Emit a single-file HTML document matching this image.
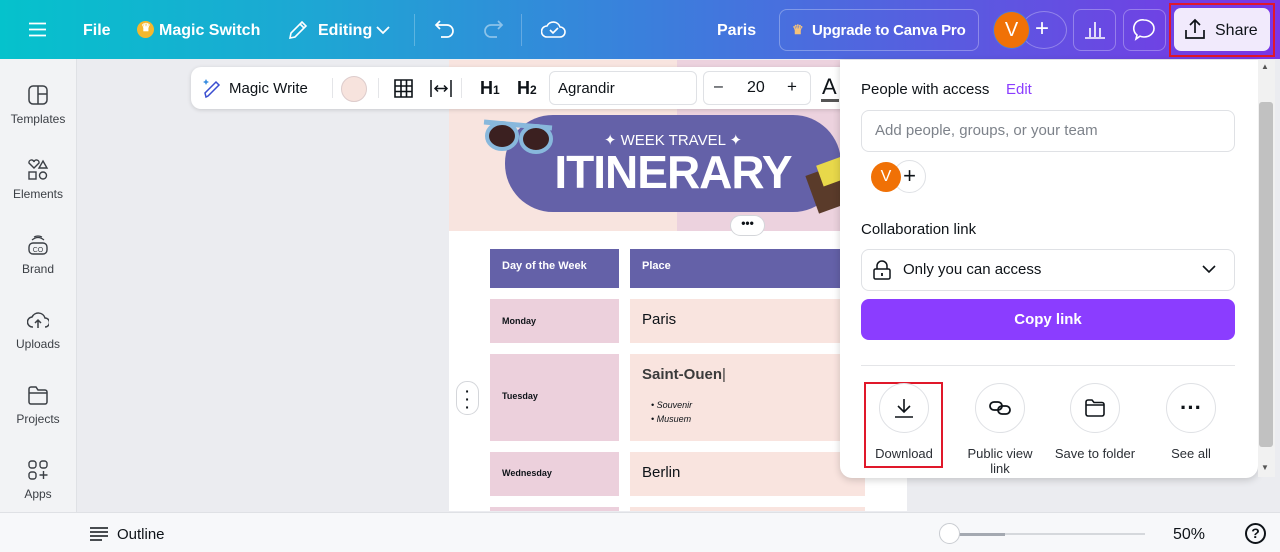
<!DOCTYPE html>
<html><head><meta charset="utf-8"><style>
*{box-sizing:border-box;margin:0;padding:0}
body{width:1280px;height:552px;overflow:hidden;font-family:"Liberation Sans",sans-serif;background:#ebecf0;position:relative;color:#0e1318}
.abs{position:absolute}
.top{left:0;top:0;width:1280px;height:59px;background:linear-gradient(90deg,#05c2cc 0%,#1ea6d4 25%,#3a80dc 50%,#5a5ae0 75%,#7a35e6 100%);color:#fff;font-weight:bold;font-size:16px}
.top .t{position:absolute;top:22px}
.sep{position:absolute;top:14px;width:1px;height:32px;background:rgba(255,255,255,.25)}
.side{left:0;top:59px;width:76px;height:453px;background:#f2f3f5}
.side .it{position:absolute;left:0;width:76px;text-align:center;font-size:12px;color:#3b3f45}
.side .it svg{display:block;margin:0 auto 6px}
.bottom{left:0;top:512px;width:1280px;height:40px;background:#f7f8fa;border-top:1px solid #dfe1e5}
.page{left:449px;top:60px;width:458px;height:451px;background:#fff;overflow:hidden}
.cell{position:absolute}
.tb{left:191px;top:67px;width:670px;height:42px;background:#fff;border-radius:10px;box-shadow:0 1px 4px rgba(0,0,0,.15);font-size:15px}
.panel{left:840px;top:60px;width:418px;height:418px;background:#fff;border-radius:0 0 12px 12px;box-shadow:0 2px 8px rgba(0,0,0,.18)}
.circ{position:absolute;width:50px;height:50px;border:1px solid #dfe1e5;border-radius:50%;display:flex;align-items:center;justify-content:center}
.lbl{position:absolute;font-size:13px;color:#2b2f35;text-align:center;width:90px;line-height:15px}
</style></head><body>
<div class="abs top">
  <svg class="abs" style="left:29px;top:22px" width="17" height="15"><path d="M0 1.5h17M0 7.5h17M0 13.5h17" stroke="#fff" stroke-width="1.8"/></svg>
  <span class="t" style="left:83px">File</span>
  <div class="abs" style="left:137px;top:21px;width:17px;height:17px;border-radius:50%;background:#f5b82e"></div>
  <span class="abs" style="left:141px;top:21px;color:#fff;font-size:11px">♛</span>
  <span class="t" style="left:159px">Magic Switch</span>
  <svg class="abs" style="left:287px;top:19px" width="22" height="22"><path d="M3 19l1-5L15 3l4 4L8 18z M13 5l4 4" fill="none" stroke="#fff" stroke-width="1.6"/></svg>
  <span class="t" style="left:318px">Editing</span>
  <svg class="abs" style="left:376px;top:26px" width="14" height="9"><path d="M1 1l6 6 6-6" fill="none" stroke="#fff" stroke-width="1.8"/></svg>
  <div class="sep" style="left:414px"></div>
  <svg class="abs" style="left:434px;top:19px" width="22" height="20"><path d="M6 2L2 6l4 4M2 6h11a6 6 0 010 12H7" fill="none" stroke="#fff" stroke-width="1.7"/></svg>
  <svg class="abs" style="left:482px;top:19px" width="22" height="20"><path d="M16 2l4 4-4 4M20 6H9a6 6 0 000 12h6" fill="none" stroke="rgba(255,255,255,.45)" stroke-width="1.7"/></svg>
  <div class="sep" style="left:521px"></div>
  <svg class="abs" style="left:541px;top:19px" width="25" height="20"><path d="M6 18h13a5 5 0 000-10 7 7 0 00-13-1 5 5 0 000 11z M9 11l3 3 5-5" fill="none" stroke="#fff" stroke-width="1.6"/></svg>
  <span class="t" style="left:717px">Paris</span>
  <div class="abs" style="left:779px;top:9px;width:200px;height:42px;border:1px solid rgba(255,255,255,.3);border-radius:8px"></div>
  <span class="abs" style="left:792px;top:22px;color:#f5c27a;font-size:13px">♛</span>
  <span class="t" style="left:812px;font-size:15px;letter-spacing:-0.2px">Upgrade to Canva Pro</span>
  <div class="abs" style="left:1021px;top:11px;width:46px;height:38px;border:1px solid rgba(255,255,255,.3);border-radius:50%"></div>
  <span class="abs" style="left:1035px;top:15px;font-size:24px;font-weight:normal">+</span>
  <div class="abs" style="left:993px;top:11px;width:37px;height:38px;border-radius:50%;background:#f07106;border:1px solid #4a77e0;text-align:center;line-height:36px;font-size:20px;font-weight:normal">V</div>
  <div class="abs" style="left:1073px;top:9px;width:43px;height:42px;border:1px solid rgba(255,255,255,.3);border-radius:8px"></div>
  <svg class="abs" style="left:1084px;top:19px" width="22" height="20"><path d="M1 19h20M6 18V9M11 18V3M16 18V9" stroke="#fff" stroke-width="1.6"/></svg>
  <div class="abs" style="left:1123px;top:9px;width:43px;height:42px;border:1px solid rgba(255,255,255,.3);border-radius:8px"></div>
  <svg class="abs" style="left:1132px;top:18px" width="24" height="24"><path d="M12 2a10 8.5 0 110 17c-1.5 0-3-.3-4-.8L4 21l1-4A8.5 8.5 0 0112 2z" fill="none" stroke="#fff" stroke-width="1.6"/></svg>
  <div class="abs" style="left:1169px;top:3px;width:106px;height:54px;border:2px solid #e0182a"></div>
  <div class="abs" style="left:1174px;top:8px;width:96px;height:43px;background:#f1eafc;border-radius:7px"></div>
  <svg class="abs" style="left:1184px;top:18px" width="22" height="22"><path d="M2 12v8h18v-8M11 15V2M6 7l5-5 5 5" fill="none" stroke="#0e1318" stroke-width="1.7"/></svg>
  <span class="abs" style="left:1215px;top:22px;color:#0e1318;font-weight:normal">Share</span>
</div>

<div class="abs side">
  <div class="it" style="top:25px"><svg width="22" height="22"><rect x="2" y="2" width="18" height="18" rx="4" fill="none" stroke="#3b3f45" stroke-width="1.5"/><path d="M11 2v18M11 10h9" stroke="#3b3f45" stroke-width="1.5"/></svg>Templates</div>
  <div class="it" style="top:100px"><svg width="22" height="22"><path d="M2 4a2.5 2.5 0 015-1 2.5 2.5 0 015 1l-5 5z M16 2l4 7h-8z" fill="none" stroke="#3b3f45" stroke-width="1.4"/><rect x="2" y="13" width="7" height="7" fill="none" stroke="#3b3f45" stroke-width="1.4"/><circle cx="16" cy="16.5" r="3.5" fill="none" stroke="#3b3f45" stroke-width="1.4"/></svg>Elements</div>
  <div class="it" style="top:175px"><svg width="22" height="22"><rect x="2" y="9" width="18" height="11" rx="4" fill="none" stroke="#3b3f45" stroke-width="1.4"/><path d="M5 6q6-5 12 0M7 3q4-2 8 0" fill="none" stroke="#3b3f45" stroke-width="1.2"/><text x="11" y="18" font-size="7" text-anchor="middle" fill="#3b3f45" font-family="Liberation Sans">CO</text></svg>Brand</div>
  <div class="it" style="top:250px"><svg width="22" height="22"><path d="M6 18a5 5 0 01-1-10 7 7 0 0113 1 4.5 4.5 0 010 9M11 19v-8M8 14l3-3 3 3" fill="none" stroke="#3b3f45" stroke-width="1.5"/></svg>Uploads</div>
  <div class="it" style="top:325px"><svg width="22" height="22"><path d="M2 5a2 2 0 012-2h5l2 3h7a2 2 0 012 2v10a2 2 0 01-2 2H4a2 2 0 01-2-2zM2 9h18" fill="none" stroke="#3b3f45" stroke-width="1.5"/></svg>Projects</div>
  <div class="it" style="top:400px"><svg width="22" height="22"><rect x="2" y="2" width="7" height="7" rx="2.5" fill="none" stroke="#3b3f45" stroke-width="1.4"/><rect x="13" y="2" width="7" height="7" rx="2.5" fill="none" stroke="#3b3f45" stroke-width="1.4"/><rect x="2" y="13" width="7" height="7" rx="2.5" fill="none" stroke="#3b3f45" stroke-width="1.4"/><path d="M16.5 12v8M12.5 16h8" stroke="#3b3f45" stroke-width="1.4"/></svg>Apps</div>
</div>
<div class="abs" style="left:76px;top:59px;width:1px;height:453px;background:#dfe1e5"></div>

<div class="abs page">
  <div class="cell" style="left:0;top:0;width:228px;height:171px;background:#f8e4df"></div>
  <div class="cell" style="left:228px;top:0;width:230px;height:171px;background:#ecd2de"></div>
  <div class="cell" style="left:56px;top:55px;width:336px;height:97px;background:#6461a8;border-radius:48px"></div>
  <div class="cell" style="left:56px;top:71px;width:336px;text-align:center;color:#fff;font-size:15px">✦ WEEK TRAVEL ✦</div>
  <div class="cell" style="left:56px;top:85px;width:336px;text-align:center;color:#fff;font-size:46px;font-weight:bold;letter-spacing:-1px">ITINERARY</div>
  <svg class="cell" style="left:33px;top:58px" width="72" height="36"><path d="M2 4l68 6" stroke="#88b8dc" stroke-width="5"/><ellipse cx="20" cy="18" rx="15" ry="13" fill="#3b2020" stroke="#88b8dc" stroke-width="4"/><ellipse cx="54" cy="21" rx="15" ry="13" fill="#3b2020" stroke="#88b8dc" stroke-width="4"/></svg>
  <div class="cell" style="left:362px;top:108px;width:40px;height:40px;background:#5a3b2a;transform:rotate(-20deg)"></div>
  <div class="cell" style="left:370px;top:100px;width:30px;height:22px;background:#e8d84a;transform:rotate(-20deg)"></div>
  <div class="cell" style="left:281px;top:155px;width:35px;height:21px;background:#fff;border:1px solid #d4d6da;border-radius:11px;text-align:center;font-size:12px;line-height:14px;font-weight:bold">•••</div>
  <div class="cell" style="left:41px;top:189px;width:129px;height:39px;background:#6461a8;color:#fff;font-size:11px;font-weight:bold;padding:11px 12px">Day of the Week</div>
  <div class="cell" style="left:181px;top:189px;width:235px;height:39px;background:#6461a8;color:#fff;font-size:11px;font-weight:bold;padding:11px 12px">Place</div>
  <div class="cell" style="left:41px;top:239px;width:129px;height:44px;background:#ecd0dc;font-size:9px;font-weight:bold;padding:17px 12px">Monday</div>
  <div class="cell" style="left:181px;top:239px;width:235px;height:44px;background:#f9e4df;font-size:15px;padding:12px 12px">Paris</div>
  <div class="cell" style="left:41px;top:294px;width:129px;height:87px;background:#ecd0dc;font-size:9px;font-weight:bold;padding:37px 12px">Tuesday</div>
  <div class="cell" style="left:181px;top:294px;width:235px;height:87px;background:#f9e4df;padding:12px 12px">
    <div style="font-size:15px;font-weight:bold;color:#3b3b3b">Saint-Ouen<span style="font-weight:normal">|</span></div>
    <div style="font-size:9px;font-style:italic;margin-top:15px;padding-left:9px;line-height:14px">• Souvenir<br>• Musuem</div></div>
  <div class="cell" style="left:41px;top:392px;width:129px;height:44px;background:#ecd0dc;font-size:9px;font-weight:bold;padding:16px 12px">Wednesday</div>
  <div class="cell" style="left:181px;top:392px;width:235px;height:44px;background:#f9e4df;font-size:15px;padding:12px 12px">Berlin</div>
  <div class="cell" style="left:41px;top:447px;width:129px;height:10px;background:#ecd0dc"></div>
  <div class="cell" style="left:181px;top:447px;width:235px;height:10px;background:#f9e4df"></div>
</div>
<div class="abs" style="left:456px;top:381px;width:23px;height:34px;background:#fff;border:1px solid #d4d6da;border-radius:11px;text-align:center;font-size:14px;line-height:8px;padding-top:5px;font-weight:bold">·<br>·<br>·</div>

<div class="abs tb">
  <svg class="abs" style="left:10px;top:10px" width="22" height="22"><path d="M5 20l-1-4L15 5l3 3L7 19z" fill="none" stroke="#3a4ed0" stroke-width="1.5"/><path d="M5 2l1 2 2 1-2 1-1 2-1-2-2-1 2-1z" fill="#3a8ee0"/></svg>
  <span class="abs" style="left:38px;top:13px">Magic Write</span>
  <div class="abs" style="left:141px;top:11px;width:1px;height:20px;background:#e4e5e8"></div>
  <div class="abs" style="left:150px;top:9px;width:26px;height:26px;border-radius:50%;background:#f7e3dd;border:1px solid #dcc"></div>
  <div class="abs" style="left:187px;top:11px;width:1px;height:20px;background:#e4e5e8"></div>
  <svg class="abs" style="left:203px;top:12px" width="19" height="19"><path d="M1 1h17v17H1zM1 7h17M1 12.5h17M7 1v17M12.5 1v17" fill="none" stroke="#0e1318" stroke-width="1.6"/></svg>
  <svg class="abs" style="left:239px;top:13px" width="22" height="17"><path d="M1 0v17M21 0v17M5 8.5h12M8 5.5l-3 3 3 3M14 5.5l3 3-3 3" fill="none" stroke="#0e1318" stroke-width="1.5"/></svg>
  <div class="abs" style="left:270px;top:11px;width:1px;height:20px;background:#e4e5e8"></div>
  <span class="abs" style="left:289px;top:11px;font-size:18px;font-weight:bold">H<span style="font-size:12px">1</span></span>
  <span class="abs" style="left:326px;top:11px;font-size:18px;font-weight:bold">H<span style="font-size:12px">2</span></span>
  <div class="abs" style="left:358px;top:4px;width:148px;height:34px;border:1px solid #dfe1e5;border-radius:6px;padding:8px 8px">Agrandir</div>
  <div class="abs" style="left:512px;top:4px;width:108px;height:34px;border:1px solid #dfe1e5;border-radius:6px"></div>
  <span class="abs" style="left:523px;top:11px;font-size:16px">–</span>
  <span class="abs" style="left:556px;top:12px;font-size:16px">20</span>
  <span class="abs" style="left:596px;top:10px;font-size:17px">+</span>
  <span class="abs" style="left:631px;top:7px;font-size:22px">A</span>
  <div class="abs" style="left:630px;top:32px;width:18px;height:3px;background:#555"></div>
</div>

<div class="abs panel">
  <span class="abs" style="left:21px;top:21px;font-size:15px">People with access</span>
  <span class="abs" style="left:166px;top:21px;font-size:15px;color:#8b3dff">Edit</span>
  <div class="abs" style="left:21px;top:50px;width:374px;height:42px;border:1px solid #dfe1e5;border-radius:8px;padding:11px 13px;color:#7d828a;font-size:15px">Add people, groups, or your team</div>
  <div class="abs" style="left:53px;top:100px;width:33px;height:33px;border:1px solid #dfe1e5;border-radius:50%;text-align:center;line-height:30px;font-size:22px">+</div>
  <div class="abs" style="left:31px;top:102px;width:30px;height:30px;background:#f07106;border-radius:50%;text-align:center;line-height:30px;color:#fff;font-size:16px">V</div>
  <span class="abs" style="left:21px;top:161px;font-size:15px">Collaboration link</span>
  <div class="abs" style="left:21px;top:189px;width:374px;height:42px;border:1px solid #dfe1e5;border-radius:8px"></div>
  <svg class="abs" style="left:33px;top:200px" width="18" height="20"><path d="M4 9V6a5 5 0 0110 0v3" fill="none" stroke="#0e1318" stroke-width="1.5"/><rect x="1" y="9" width="16" height="10" rx="1.5" fill="none" stroke="#0e1318" stroke-width="1.5"/><path d="M9 13v3" stroke="#0e1318" stroke-width="1.8"/></svg>
  <span class="abs" style="left:63px;top:201px;font-size:15px">Only you can access</span>
  <svg class="abs" style="left:362px;top:205px" width="14" height="9"><path d="M1 1l6 6 6-6" fill="none" stroke="#0e1318" stroke-width="1.6"/></svg>
  <div class="abs" style="left:21px;top:239px;width:374px;height:41px;background:#8b3dff;border-radius:8px;color:#fff;font-weight:bold;font-size:15px;text-align:center;line-height:41px">Copy link</div>
  <div class="abs" style="left:21px;top:305px;width:374px;height:1px;background:#e4e5e8"></div>
  <div class="abs" style="left:24px;top:322px;width:79px;height:86px;border:2px solid #e0182a"></div>
  <div class="circ" style="left:39px;top:323px"><svg width="22" height="22"><path d="M11 2v13M5 9l6 6 6-6M2 20h18" fill="none" stroke="#0e1318" stroke-width="1.6"/></svg></div>
  <div class="lbl" style="left:19px;top:386px">Download</div>
  <div class="circ" style="left:135px;top:323px"><svg width="22" height="14"><rect x="1" y="1" width="12" height="8" rx="4" fill="none" stroke="#0e1318" stroke-width="1.8"/><rect x="9" y="5" width="12" height="8" rx="4" fill="none" stroke="#0e1318" stroke-width="1.8"/></svg></div>
  <div class="lbl" style="left:115px;top:386px">Public view<br>link</div>
  <div class="circ" style="left:230px;top:323px"><svg width="20" height="18"><path d="M1 3a2 2 0 012-2h4l2 2.5h8a2 2 0 012 2V15a2 2 0 01-2 2H3a2 2 0 01-2-2zM1 6h18" fill="none" stroke="#0e1318" stroke-width="1.6"/></svg></div>
  <div class="lbl" style="left:210px;top:386px;width:90px">Save to folder</div>
  <div class="circ" style="left:326px;top:323px;font-size:22px;font-weight:bold;line-height:10px">···</div>
  <div class="lbl" style="left:306px;top:386px">See all</div>
</div>
<div class="abs" style="left:1258px;top:60px;width:17px;height:417px;background:#f1f1f1"></div>
<div class="abs" style="left:1259px;top:102px;width:14px;height:345px;background:#c1c1c1;border-radius:3px"></div>
<span class="abs" style="left:1261px;top:62px;font-size:8px;color:#555">▲</span>
<span class="abs" style="left:1261px;top:463px;font-size:8px;color:#555">▼</span>

<div class="abs bottom">
  <svg class="abs" style="left:90px;top:14px" width="18" height="14"><path d="M0 1h18M0 5h18M0 9h18M0 13h12" stroke="#0e1318" stroke-width="1.5"/></svg>
  <span class="abs" style="left:117px;top:13px;font-size:15px">Outline</span>
  <div class="abs" style="left:950px;top:20px;width:55px;height:3px;background:#a4a9b1"></div>
  <div class="abs" style="left:1005px;top:20px;width:140px;height:2px;background:#d5d8dc"></div>
  <div class="abs" style="left:939px;top:10px;width:21px;height:21px;border-radius:50%;background:#fff;border:1px solid #c9ccd1"></div>
  <span class="abs" style="left:1173px;top:13px;font-size:16px">50%</span>
  <div class="abs" style="left:1245px;top:10px;width:21px;height:21px;border-radius:50%;border:2px solid #0e1318;text-align:center;font-size:14px;font-weight:bold;line-height:17px">?</div>
</div>
</body></html>
